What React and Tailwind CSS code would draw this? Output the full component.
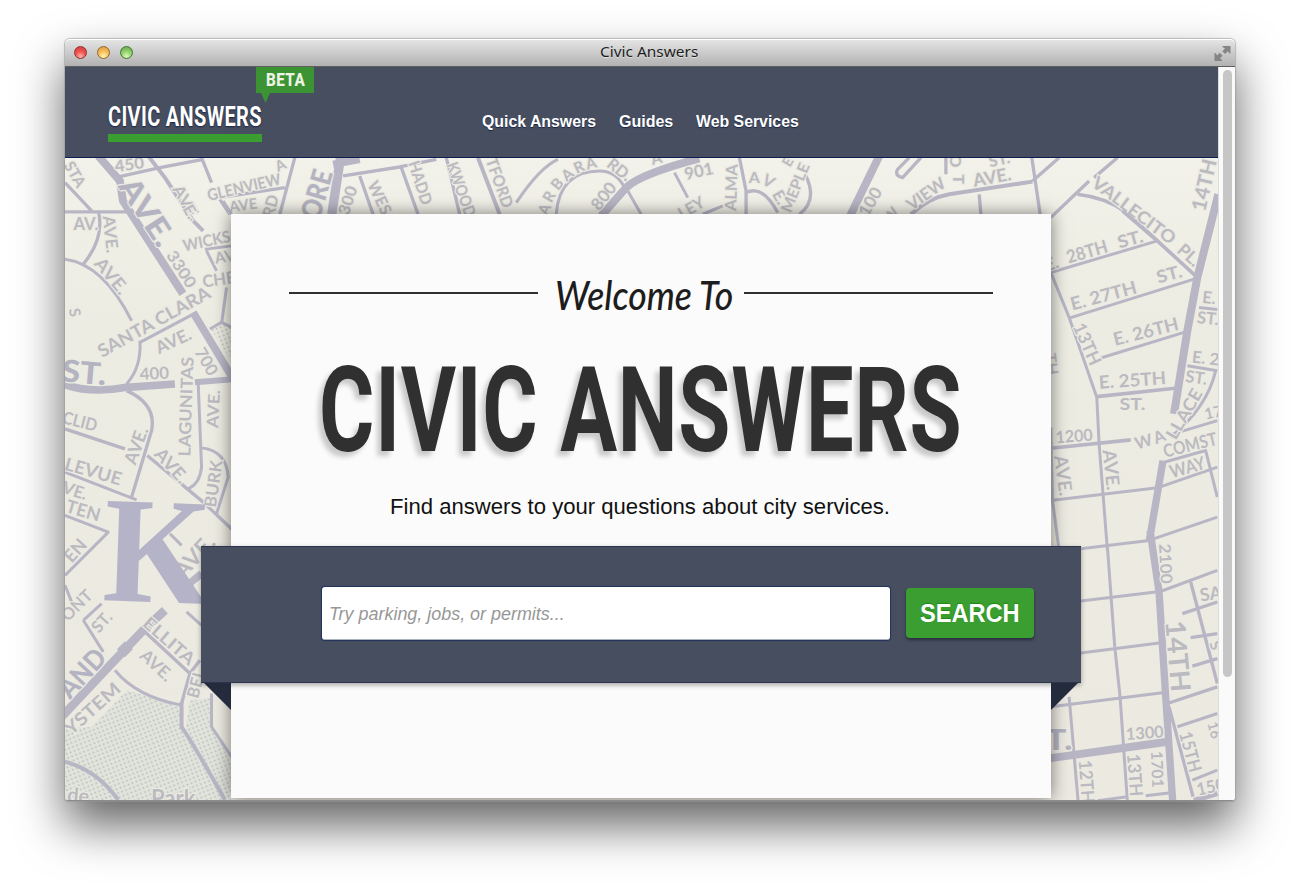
import React, { useLayoutEffect, useRef, useState } from "react";

/* Text condensed or widened horizontally to fill the width of its box. */
function Fit({ className = "", inner = "", children }) {
  const box = useRef(null);
  const text = useRef(null);
  const [k, setK] = useState(1);
  useLayoutEffect(() => {
    setK(box.current.clientWidth / text.current.offsetWidth);
  }, []);
  return (
    <span ref={box} className={`block whitespace-nowrap ${className}`}>
      <span ref={text} className={`inline-block origin-left ${inner}`} style={{ transform: `scaleX(${k})` }}>
        {children}
      </span>
    </span>
  );
}

/* Map labels: [text, x, y, rotation, size, length, bold] */
function Sheet({ x, y, roads, labels }) {
  return (
    <g transform={`translate(${x} ${y}) scale(0.33333)`}>
      {roads.map(([w, d], i) => (
        <path key={i} d={d} strokeWidth={w} fill="none" stroke="#b8b6c5" strokeLinejoin="round" />
      ))}
      {labels.map(([t, lx, ly, r, s, len, bold], i) => (
        <text
          key={i}
          transform={`translate(${lx} ${ly}) rotate(${r})`}
          dy={s * 0.36}
          fontSize={s}
          fontWeight={bold ? 900 : 700}
          textAnchor="middle"
          textLength={len || undefined}
          lengthAdjust="spacingAndGlyphs"
          fill={bold ? "#b4b3c1" : "#bbbac0"}
          stroke="#ecebe2"
          strokeWidth="7"
          paintOrder="stroke"
        >
          {t}
        </text>
      ))}
    </g>
  );
}

const sheets = [
  {
    x: 50, y: 30,
    roads: [
      [24, "M145 375L210 450L219 510L399 789"],
      [10, "M45 455L125 540M45 543H235M195 440L330 410L460 385"],
      [12, "M295 375L345 440L430 570L460 600"],
      [10, "M455 380L485 455M510 500L705 470M735 380L690 550M510 505L540 550"],
      [28, "M873 375L846 550"],
      [22, "M850 400L930 385"],
      [10, "M880 435L1050 408L1160 385M930 435L970 550M1055 410L1105 550M1190 380L1230 550"],
    ],
    labels: [
      ["STA", 75, 430, 60, 46], ["450", 238, 400, -8, 48, 88], ["AVE.", 410, 515, 60, 48, 115],
      ["GLENVIEW", 582, 468, -13, 48, 225], ["AVE", 580, 522, -8, 44], ["A", 692, 402, -25, 44],
      ["RD", 662, 525, -75, 48], ["ORE", 800, 490, -74, 84, 150, 1], ["300", 893, 508, -72, 48, 88],
      ["WES", 990, 500, 65, 48, 105], ["HADD", 1112, 455, 72, 48, 135],
    ],
  },
  {
    x: 440, y: 30,
    roads: [
      [12, "M115 380L180 550"],
      [9, "M355 385Q300 410 230 515M350 550Q360 420 480 420Q530 420 555 470"],
      [24, "M485 555L560 470Q600 430 780 382"],
      [9, "M565 480L605 550M705 425L745 500M790 550L850 525"],
      [10, "M900 380L920 480V550M920 485Q970 460 1015 545M1100 435Q1135 510 1080 550"],
    ],
    labels: [
      ["KWOOD", 65, 475, 70, 48, 170], ["TFORD", 180, 455, 70, 48, 155], ["A", 314, 535, -66, 46],
      ["R", 328, 497, -60, 46], ["B", 352, 459, -50, 46], ["A", 383, 430, -40, 46], ["R", 418, 408, -25, 46], ["A", 454, 396, -15, 46],
      ["RD.", 540, 415, 38, 48], ["A", 650, 382, -15, 46], ["800", 492, 495, -52, 50, 90], ["901", 778, 420, -12, 50, 88],
      ["ALMA", 875, 470, -88, 48, 140], ["A", 945, 440, 0, 48], ["V", 988, 450, 30, 48], ["E.", 1022, 498, 60, 48],
      ["LEY", 755, 530, -30, 48], ["MEPLE", 1067, 470, -68, 46, 155], ["E", 1045, 392, -60, 42],
    ],
  },
  {
    x: 840, y: 30,
    roads: [
      [24, "M120 375L30 560"],
      [10, "M245 380L190 440Q165 435 175 415L210 380M320 380V430"],
      [12, "M215 550Q270 500 330 490L580 452"],
      [10, "M420 490L425 550M578 380L603 550M580 450L660 380M635 560L750 450M765 440L835 380"],
      [11, "M715 490Q800 500 860 543L955 630"],
    ],
    labels: [
      ["100", 92, 512, -60, 50, 90], ["VIEW", 260, 488, -35, 50, 130], ["AVE.", 458, 438, -10, 54, 115],
      ["ST.", 480, 385, -12, 48], ["T", 358, 445, 90, 48], ["O", 350, 390, 90, 48], ["VALLECITO", 885, 538, 37, 52, 300],
      ["14TH", 1095, 462, -77, 60, 158], ["W", 155, 553, -50, 46],
    ],
  },
  {
    x: 60, y: 200,
    roads: [
      [10, "M115 30Q135 110 70 190"],
      [9, "M15 175Q130 190 215 360"],
      [9, "M240 425L410 335M240 420Q245 500 200 550"],
      [23, "M400 335L520 535"],
      [23, "M10 550Q90 580 200 560L345 550"],
      [18, "M405 545L520 536"],
      [10, "M200 570Q290 610 275 690L215 890M15 685L195 745M262 765L430 905L520 990"],
      [9, "M415 550L425 800Q420 850 385 865M425 742Q500 750 505 830L470 940M15 815L230 898"],
      [9, "M15 945L145 995L15 1125M435 145L515 135M440 150L470 210M500 260L485 370M490 0L515 40"],
      [9, "M450 385L485 365L515 380"],
    ],
    labels: [
      ["AVE.", 262, 32, 57, 92, 225, 1], ["AV.", 78, 68, 0, 50], ["AVE.", 152, 100, 84, 50, 112], ["AVE.", 155, 225, 50, 54, 125],
      ["3300", 365, 205, 57, 48, 122], ["E.", 392, 32, 60, 48], ["WICKS", 440, 120, -12, 48, 145], ["CHE", 477, 235, -8, 50],
      ["AVE", 508, 165, -10, 46], ["SANTA CLARA", 282, 363, -29, 54, 378], ["AVE.", 340, 420, -25, 52, 112],
      ["ST.", 72, 515, 5, 92, 135, 1], ["400", 283, 518, -3, 50, 88], ["700", 440, 482, 60, 50, 88],
      ["LAGUNITAS", 378, 618, -88, 50, 300], ["AVE.", 460, 625, -87, 48, 115], ["AVE.", 228, 735, -70, 54, 115],
      ["AVE.", 335, 795, 48, 54, 122], ["BURK", 460, 850, -82, 50, 142], ["CLID", 60, 662, 14, 52, 105], ["LEVUE", 100, 812, 16, 54, 175],
      ["VE.", 45, 870, 18, 50], ["TEN", 70, 930, 16, 54, 105], ["S", 45, 335, 80, 46],
    ],
  },
  {
    x: 60, y: 530,
    roads: [
      [9, "M15 165L35 215M70 270L125 220M70 270L130 365"],
      [26, "M5 560L150 405L250 300L315 240"],
      [34, "M183 369L207 345"],
      [10, "M250 300L390 430M420 390L390 430L365 520"],
      [12, "M365 515V590Q400 640 495 810M15 695Q110 720 175 810"],
      [9, "M165 420Q230 500 365 525M330 10L365 45M380 245L425 285M455 490V590L515 680"],
      [22, "M378 168L425 130"],
    ],
    labels: [
      ["EN", 45, 60, -48, 54], ["AVE.", 402, 78, -47, 66, 150], ["ONT", 50, 225, -45, 50], ["ST.", 125, 275, -48, 50],
      ["ELLITA", 328, 332, 41, 52, 188], ["AVE.", 290, 405, 43, 52, 112], ["AND", 66, 428, -47, 82, 168, 1],
      ["YSTEM", 97, 535, -42, 54, 205], ["BEL", 408, 460, -75, 50], ["de", 55, 796, 5, 60], ["Park", 340, 803, 0, 66],
    ],
  },
  {
    x: 1045, y: 200,
    roads: [
      [24, "M523 -20L460 230L430 390L390 640"],
      [11, "M235 30L340 120L460 230"],
      [9, "M20 215L340 120M20 215L75 350L158 590L165 730L190 1050M75 352L460 232M170 472L430 392"],
      [11, "M158 588L400 562M20 743L260 718"],
      [9, "M20 900L340 862L520 800M465 320L520 326M430 495L520 510M515 510Q490 620 380 710M380 702L520 660"],
      [9, "M360 785L485 750L520 890M20 680L25 900L45 1050M110 1045L315 1020L520 950"],
      [22, "M357 780L315 1025"],
    ],
    labels: [
      ["E.", 22, 188, -17, 52], ["28TH", 128, 152, -16, 54, 126], ["ST.", 258, 115, -15, 52, 78], ["E. 27TH", 178, 284, -15, 54, 204],
      ["ST.", 375, 220, -15, 52, 78], ["E. 26TH", 305, 392, -14, 54, 200], ["13TH", 130, 430, 66, 54, 132],
      ["E. 25TH", 265, 538, -4, 54, 202], ["ST.", 265, 610, 0, 52, 78], ["1200", 90, 706, -4, 50, 112], ["W", 298, 722, -16, 50], ["A", 345, 708, -22, 50],
      ["LLACE", 420, 640, -60, 52, 165], ["COMST", 438, 733, -14, 54, 164], ["WAY", 430, 800, -16, 54, 108],
      ["AVE.", 58, 825, 82, 56, 122], ["AVE.", 202, 808, 84, 56, 122], ["PL.", 435, 162, 42, 52], ["E.", 495, 290, 6, 50],
      ["ST.", 492, 352, 6, 50], ["E. 2", 485, 472, 6, 50], ["ST.", 457, 530, 8, 50], ["17", 508, 635, -12, 46], ["TH", 22, 490, 82, 48],
    ],
  },
  {
    x: 1045, y: 530,
    roads: [
      [22, "M318 0L345 185L365 500L386 815"],
      [9, "M345 185L520 120M110 212L335 185M110 368L345 338M20 530L355 488M190 50L212 350L228 500L250 815M75 500L102 815"],
      [24, "M15 685L370 635"],
      [10, "M370 520L520 470M375 530L447 800M440 155L520 460M415 250L520 215M440 322L520 310M445 408L520 385"],
      [9, "M400 590L520 550M445 750L520 720M305 797L380 788M160 812L250 800"],
      [16, "M450 812L520 790"],
    ],
    labels: [
      ["2100", 365, 100, 87, 48, 120], ["14TH", 402, 378, 85, 82, 214], ["1300", 302, 608, -4, 50, 114], ["T.", 45, 628, 0, 86, 80, 1],
      ["12TH", 128, 755, 86, 54, 130], ["13TH", 273, 735, 86, 54, 128], ["1701", 340, 718, 88, 48, 110], ["15TH", 440, 665, 75, 54, 124],
      ["SA", 500, 190, -8, 54], ["150", 500, 770, -12, 52, 86], ["16", 512, 600, 75, 44], ["S", 515, 345, 70, 46],
    ],
  },
];

function StreetMap() {
  return (
    <svg className="absolute inset-0 h-full w-full" viewBox="65 157 1154 643" preserveAspectRatio="none" fontFamily="Lato, 'Liberation Sans', sans-serif">
      <defs>
        <pattern id="dots" width="6" height="6" patternUnits="userSpaceOnUse" patternTransform="rotate(24)">
          <circle cx="1.5" cy="1.5" r="1.05" fill="#b9bfbf" />
          <circle cx="4.5" cy="4.5" r="1.05" fill="#b9bfbf" />
        </pattern>
        <linearGradient id="paper" x1="0" y1="0" x2="0" y2="1">
          <stop offset="0" stopColor="#f3f2ea" />
          <stop offset="0.25" stopColor="#edece2" />
          <stop offset="1" stopColor="#ebe9e0" />
        </linearGradient>
      </defs>
      <rect x="65" y="157" width="1154" height="643" fill="url(#paper)" />
      <path d="M127 690L182 706L184 730L223 800H65V728L92 727ZM190 700L210 698L212 728L232 758V800H226L186 728Z" fill="#e2e5dc" />
      <path d="M127 690L182 706L184 730L223 800H65V728L92 727ZM190 700L210 698L212 728L232 758V800H226L186 728ZM211 328L222 322L231 327V360Z" fill="url(#dots)" />
      {sheets.map((s, i) => (
        <Sheet key={i} {...s} />
      ))}
      <text transform="translate(102 600) rotate(2)" fontFamily="'Liberation Serif', serif" fontWeight="700" fontSize="152" textLength="108" lengthAdjust="spacingAndGlyphs" fill="#b5b3c7">
        K
      </text>
    </svg>
  );
}

function TitleBar() {
  const light = "h-[13px] w-[13px] rounded-full border";
  return (
    <div className="relative flex h-[28px] items-center rounded-t-[5px] border-b border-[#5f5f5f] border-t border-t-white bg-gradient-to-b from-[#e4e4e4] to-[#b2b2b2] pb-[2px] pl-[9px]">
      <div className="flex gap-[10px]">
        <span className={`${light} border-[#8c3231] bg-[radial-gradient(circle_at_50%_85%,#ffb5ae_0%,#ee5450_45%,#d33a3c_100%)]`} />
        <span className={`${light} border-[#96672a] bg-[radial-gradient(circle_at_50%_85%,#fff3b0_0%,#f5bd58_50%,#dd9438_100%)]`} />
        <span className={`${light} border-[#44783a] bg-[radial-gradient(circle_at_50%_85%,#dcfbb8_0%,#8fcf6c_50%,#5ca347_100%)]`} />
      </div>
      <div className="ml-[467px] w-[98px] font-['Noto_Sans',sans-serif] text-[14px] leading-[20px] text-[#1c1c1c] [text-shadow:0_1px_0_rgba(255,255,255,0.5)]">
        <Fit>Civic Answers</Fit>
      </div>
      <svg className="mt-[2px] mr-[4px] ml-auto h-[17px] w-[17px]" viewBox="0 0 17 17" fill="#858585">
        <path d="M8.5 1H16.5V8.5H15.5L13.8 6.2L11.2 9L8.3 6.2L11 3.6L8.5 2ZM8 16H.5V8H1.5L3.2 10.4L5.6 7.8L8.6 10.7L6 13.2L8 15Z" />
      </svg>
    </div>
  );
}

function Header() {
  return (
    <header className="relative flex h-[91px] border-b border-[#0e1c52] bg-[#464e60] pl-[43px]">
      <div className="mt-[33px] w-[154px]">
        <Fit className="h-[34px] w-[154px] font-[Roboto,sans-serif] text-[28.5px] leading-[34px] font-bold text-white [text-shadow:0_1px_2px_#1a2340]" inner="tracking-[0.5px]">
          CIVIC ANSWERS
        </Fit>
        <div className="h-[8px] bg-[#3b9e30]" />
      </div>
      <nav className="mt-[44px] ml-[220px] flex gap-[23px] font-['Liberation_Sans',sans-serif] text-[16px] leading-[22px] font-bold text-white [text-shadow:0_1px_1px_#1a2340]">
        <Fit className="w-[114px]">Quick Answers</Fit>
        <Fit className="w-[54px]">Guides</Fit>
        <Fit className="w-[103px]">Web Services</Fit>
      </nav>
      <div className="absolute top-0 left-[191px] h-[26px] w-[58px] bg-[#3b9333] pt-[2px] pl-[10px]">
        <Fit className="w-[39px] font-[Roboto,sans-serif] text-[18px] leading-[22px] font-extrabold text-[#eef3e6]" inner="tracking-[0.5px]">
          BETA
        </Fit>
        <svg className="absolute top-[26px] left-[5px] h-[10px] w-[9px]" viewBox="0 0 9 10">
          <path d="M0 0H9L4.5 10Z" fill="#3b9333" />
        </svg>
      </div>
    </header>
  );
}

function SearchRibbon() {
  return (
    <div className="relative -mx-[30px] flex h-[137px] border-t border-b border-[#2b3550] bg-[#464e60] pt-[40px] pl-[121px] shadow-[0_2px_5px_rgba(0,0,0,0.35)]">
      <div className="h-[53px] w-[568px] rounded-[3px] border-b border-[#a9b4c0] bg-white pt-[14px] pl-[7px] font-['Liberation_Sans',sans-serif] text-[18px] leading-[26px] text-[#979797] italic shadow-[0_0_1px_1px_#22335c]">
        <Fit className="w-[236px]">Try parking, jobs, or permits...</Fit>
      </div>
      <div className="mt-px ml-[16px] h-[50px] w-[128px] rounded-[4px] bg-[#3b9e30] pt-[9px] pl-[14px] font-['Liberation_Sans',sans-serif] text-[25px] leading-[32px] font-bold text-white shadow-[0_2px_3px_rgba(20,25,40,0.6)] [text-shadow:0_-1px_1px_#1c8a14]">
        <Fit className="w-[100px]">SEARCH</Fit>
      </div>
      <svg className="absolute top-[136px] left-[3px] h-[27px] w-[27px]" viewBox="0 0 27 27">
        <path d="M0 0H27V27Z" fill="#242b3c" />
      </svg>
      <svg className="absolute top-[136px] right-[3px] h-[27px] w-[27px]" viewBox="0 0 27 27">
        <path d="M0 0H27L0 27Z" fill="#242b3c" />
      </svg>
    </div>
  );
}

function WelcomeCard() {
  return (
    <section className="relative mt-[56px] ml-[166px] h-[584px] w-[820px] bg-[#fbfbfb] shadow-[0_0_16px_rgba(0,0,0,0.5)]">
      <div className="flex h-[140px] items-start pl-[58px]">
        <div className="mt-[78px] h-[2px] w-[249px] bg-[#303030]" />
        <div className="mt-[53px] ml-[17px] w-[178px] font-[Lato,sans-serif] text-[40px] leading-[56px] text-[#1d1d1d] italic">
          <Fit inner="font-medium">Welcome To</Fit>
        </div>
        <div className="mt-[78px] ml-[11px] h-[2px] w-[249px] bg-[#303030]" />
      </div>
      <h1 className="h-[133px] pt-[2px] pl-[88px]">
        <Fit className="w-[643px] font-[Roboto,sans-serif] text-[119px] leading-[110px] font-bold text-[#303030] [text-shadow:-6px_5px_6px_rgba(0,0,0,0.2)]" inner="tracking-[1px]">
          CIVIC ANSWERS
        </Fit>
      </h1>
      <div className="h-[59px] pt-[5px] pl-[159px] font-['Liberation_Sans',sans-serif] text-[22.5px] leading-[30px] text-[#111]">
        <Fit className="w-[500px]">Find answers to your questions about city services.</Fit>
      </div>
      <SearchRibbon />
    </section>
  );
}

export default function App() {
  return (
    <div className="h-[890px] w-[1300px] overflow-hidden bg-white pt-[39px] pl-[65px]">
      <div className="w-[1170px] rounded-t-[5px] rounded-b-[3px] border-b border-[#8c8c8c] shadow-[0_0_1px_1px_rgba(150,150,150,0.6),0_24px_48px_rgba(0,0,0,0.62)]">
        <TitleBar />
        <div className="flex h-[733px] overflow-hidden rounded-b-[3px]">
          <div className="flex w-[1153px] flex-col">
            <Header />
            <main className="relative flex-1 overflow-hidden">
              <StreetMap />
              <WelcomeCard />
            </main>
          </div>
          <div className="w-[17px] border-l border-[#dcdcdc] bg-[#fafafa] pt-[3px] pl-[4px]">
            <div className="h-[607px] w-[9px] rounded-full bg-[#c6c6c6]" />
          </div>
        </div>
      </div>
    </div>
  );
}
